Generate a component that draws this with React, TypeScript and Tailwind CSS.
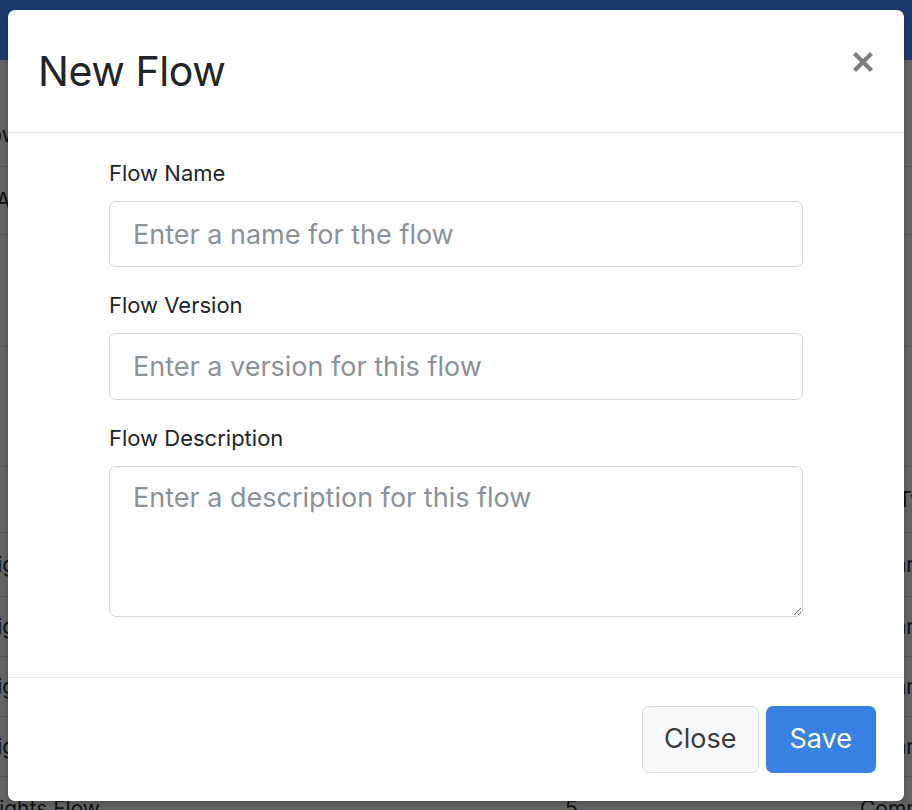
import React from "react";

const font = { fontFamily: "Inter, 'Noto Sans', sans-serif" };

function BgRow({ h, left, right, mid, border = true }: { h: string; left?: string; right?: string; mid?: string; border?: boolean }) {
  return (
    <div className={`${h} flex items-center ${border ? "border-b border-[#555555]" : ""}`}>
      <span className="-ml-[32px] w-[597px] shrink-0 text-[21px] text-[#111111] whitespace-nowrap">{left}</span>
      <span className="w-[295px] shrink-0 text-[21px] text-[#111111]">{mid}</span>
      <span className="shrink-0 text-[21px] text-[#111111] whitespace-nowrap">{right}</span>
    </div>
  );
}

export default function App() {
  return (
    <div className="relative w-[912px] h-[810px] overflow-hidden bg-[#646464]" style={font}>
      {/* dimmed page behind */}
      <div className="h-[60px] bg-[#1c3b6c]" />
      <div className="h-[107px] flex items-end pb-[16px] border-b border-[#555555]">
        <span className="-ml-[28px] text-[21px] text-[#111111]">Flow</span>
      </div>
      <div className="h-[68px] flex items-center border-b border-[#555555]">
        <span className="-ml-[4px] text-[21px] text-[#111111]">A</span>
      </div>
      <div className="h-[112px] border-b border-[#5a5a5a]" />
      <div className="h-[120px] border-b border-[#5a5a5a]" />
      <div className="h-[66px] flex items-center justify-end border-b border-[#555555]">
        <span className="mr-[-10px] text-[21px] text-[#111111]">Ty</span>
      </div>
      <BgRow h="h-[64px]" left="Insights Flow" right="Common" />
      <BgRow h="h-[60px]" left="Insights Flow" right="Common" />
      <BgRow h="h-[60px]" left="Insights Flow" right="Common" />
      <BgRow h="h-[60px]" left="Insights Flow" right="Common" />
      <div className="h-[60px] flex items-start pt-[16px]">
        <span className="-ml-[30px] w-[595px] shrink-0 text-[21px] text-[#111111] whitespace-nowrap">Insights Flow</span>
        <span className="w-[295px] shrink-0 text-[21px] text-[#111111]">5</span>
        <span className="shrink-0 text-[21px] text-[#111111] whitespace-nowrap">Common</span>
      </div>

      {/* modal */}
      <div className="absolute left-[8px] top-[10px] w-[896px] bg-white rounded-[7px] shadow-[0_2px_6px_rgba(0,0,0,0.25)] flex flex-col">
        <div className="h-[123px] px-[30px] flex items-center justify-between border-b border-[#e9ecef]">
          <h1 className="text-[41px] leading-none text-[#212529] font-normal tracking-[-0.4px]">New Flow</h1>
          <button className="w-[22px] h-[22px] mb-[18px] flex items-center justify-center" aria-label="Close">
            <svg width="22" height="22" viewBox="0 0 22 22">
              <path d="M2.5 2.5 L19.5 19.5 M19.5 2.5 L2.5 19.5" stroke="#7d7d7d" strokeWidth="4.2" strokeLinecap="butt" />
            </svg>
          </button>
        </div>
        <div className="pt-[25px] pb-[60px]">
          <div className="w-[694px] mx-auto flex flex-col gap-[23px]">
            <div className="flex flex-col">
              <label className="text-[22px] leading-[30px] text-[#212529] mb-[13px]">Flow Name</label>
              <input
                className="h-[66px] w-full border border-[#ced4da] rounded-[7px] px-[23px] text-[27px] text-[#212529] placeholder:text-[#8a9299] outline-none"
                placeholder="Enter a name for the flow"
              />
            </div>
            <div className="flex flex-col">
              <label className="text-[22px] leading-[30px] text-[#212529] mb-[13px]">Flow Version</label>
              <input
                className="h-[67px] w-full border border-[#ced4da] rounded-[7px] px-[23px] text-[27px] text-[#212529] placeholder:text-[#8a9299] outline-none"
                placeholder="Enter a version for this flow"
              />
            </div>
            <div className="flex flex-col">
              <label className="text-[22px] leading-[30px] text-[#212529] mb-[13px]">Flow Description</label>
              <textarea
                className="h-[151px] w-full border border-[#ced4da] rounded-[7px] px-[23px] py-[13px] text-[27px] leading-[36px] text-[#212529] placeholder:text-[#8a9299] outline-none"
                placeholder="Enter a description for this flow"
              />
            </div>
          </div>
        </div>
        <div className="border-t border-[#e9ecef] flex justify-end gap-[7px] px-[28px] pt-[28px] pb-[28px]">
          <button className="h-[67px] px-[21px] rounded-[7px] border border-[#dadcdf] bg-[#f8f9fa] text-[27px] text-[#3c3c3c]">
            Close
          </button>
          <button className="h-[67px] px-[24px] rounded-[7px] bg-[#3781e3] text-[27px] text-white">
            Save
          </button>
        </div>
      </div>
    </div>
  );
}
